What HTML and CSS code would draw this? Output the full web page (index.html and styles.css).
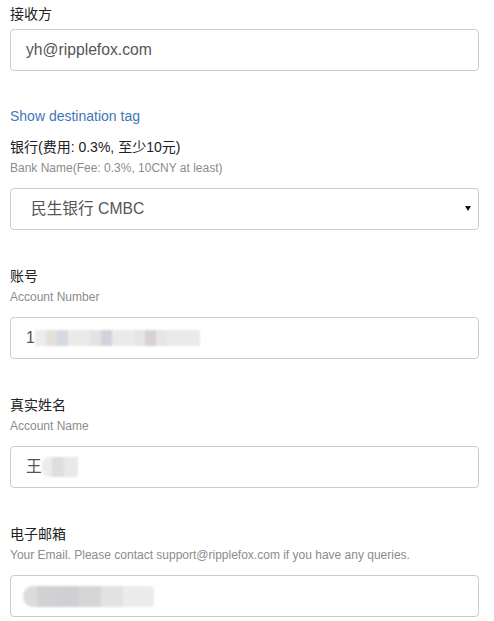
FILE: index.html
```html
<!DOCTYPE html>
<html lang="zh">
<head>
<meta charset="utf-8">
<title>Withdraw form</title>
<link rel="stylesheet" href="styles.css">
</head>
<body>
<form class="form">
  <div class="group group-recipient">
    <label class="label">接收方</label>
    <div class="input"><span class="value">yh@ripplefox.com</span></div>
  </div>

  <a class="link" href="#">Show destination tag</a>

  <div class="group group-first">
    <label class="label">银行(费用: 0.3%, 至少10元)</label>
    <div class="help">Bank Name(Fee: 0.3%, 10CNY at least)</div>
    <div class="select">
      <span class="value select-value">民生银行 CMBC</span>
    </div>
  </div>

  <div class="group">
    <label class="label">账号</label>
    <div class="help">Account Number</div>
    <div class="input"><span class="value">1</span><span class="mask mask-number"></span></div>
  </div>

  <div class="group">
    <label class="label">真实姓名</label>
    <div class="help">Account Name</div>
    <div class="input"><span class="value">王</span><span class="mask mask-name"></span></div>
  </div>

  <div class="group group-last">
    <label class="label">电子邮箱</label>
    <div class="help">Your Email. Please contact support@ripplefox.com if you have any queries.</div>
    <div class="input"><span class="mask mask-email"></span></div>
  </div>
</form>
</body>
</html>
```

FILE: styles.css
```css
* { box-sizing: border-box; }

html, body {
  margin: 0;
  padding: 0;
  background: #ffffff;
}

body {
  font-family: "Liberation Sans", Arial, "Noto Sans CJK SC", sans-serif;
  font-size: 14px;
  line-height: 20px;
  color: #333333;
}

.form {
  display: flex;
  flex-direction: column;
  padding: 4px 15px 0 10px;
}

.group {
  display: flex;
  flex-direction: column;
  margin-bottom: 36px;
}

.group-recipient {
  margin-bottom: 35px;
}

.group-first {
  margin-top: 11px;
}

.group-last {
  margin-bottom: 0;
}

.label {
  display: block;
  height: 20px;
  font-size: 14px;
  line-height: 20px;
  color: #222222;
  margin-bottom: 5px;
}

.group .help {
  font-size: 12px;
  line-height: 17px;
  height: 17px;
  color: #8c8c8c;
  margin-top: -2px;
  margin-bottom: 11px;
  white-space: nowrap;
}

.link {
  display: block;
  height: 20px;
  line-height: 20px;
  color: #3f76b8;
  text-decoration: none;
  font-size: 14px;
}

.input,
.select {
  position: relative;
  display: flex;
  align-items: center;
  height: 42px;
  border: 1px solid #cccccc;
  border-radius: 4px;
  background: #ffffff;
  padding: 0 15px;
  font-size: 15.7px;
  color: #555555;
}

.value {
  line-height: 20px;
  white-space: nowrap;
}

.select {
  padding-left: 20px;
}

.select::after {
  content: "";
  position: absolute;
  right: 7px;
  top: 17px;
  width: 0;
  height: 0;
  border-left: 3px solid transparent;
  border-right: 3px solid transparent;
  border-top: 5px solid #111111;
}

.mask {
  display: inline-block;
  filter: blur(1px);
}

.mask-number {
  width: 165px;
  height: 16px;
  background: linear-gradient(90deg,
    #ececec 0, #ececec 11px,
    #e3dfda 11px, #e3dfda 22px,
    #d6d9e2 22px, #d6d9e2 33px,
    #eaeaea 33px, #eaeaea 55px,
    #e2e4e2 55px, #e2e4e2 66px,
    #d3d2da 66px, #d3d2da 77px,
    #eaeaea 77px, #eaeaea 99px,
    #e6e6e6 99px, #e6e6e6 110px,
    #d8d0d3 110px, #d8d0d3 121px,
    #e4e7ea 121px, #e4e7ea 132px,
    #eaeaea 132px, #eaeaea 165px);
}

.mask-name {
  width: 36px;
  height: 20px;
  border-radius: 8px 0 0 8px;
  background: linear-gradient(90deg,
    #ececec 0, #ececec 10px,
    #dedede 10px, #dedede 22px,
    #e8e8e8 22px, #e8e8e8 36px);
}

.mask-email {
  width: 131px;
  height: 21px;
  margin-left: -3px;
  border-radius: 10px 4px 4px 10px;
  background: linear-gradient(90deg,
    #dcdcdc 0, #dcdcdc 14px,
    #d2d2d2 14px, #d2d2d2 33px,
    #cfd0d4 33px, #cfd0d4 55px,
    #d6d6d6 55px, #d6d6d6 78px,
    #e2e2e2 78px, #e2e2e2 100px,
    #ececec 100px, #ececec 131px);
}
```
